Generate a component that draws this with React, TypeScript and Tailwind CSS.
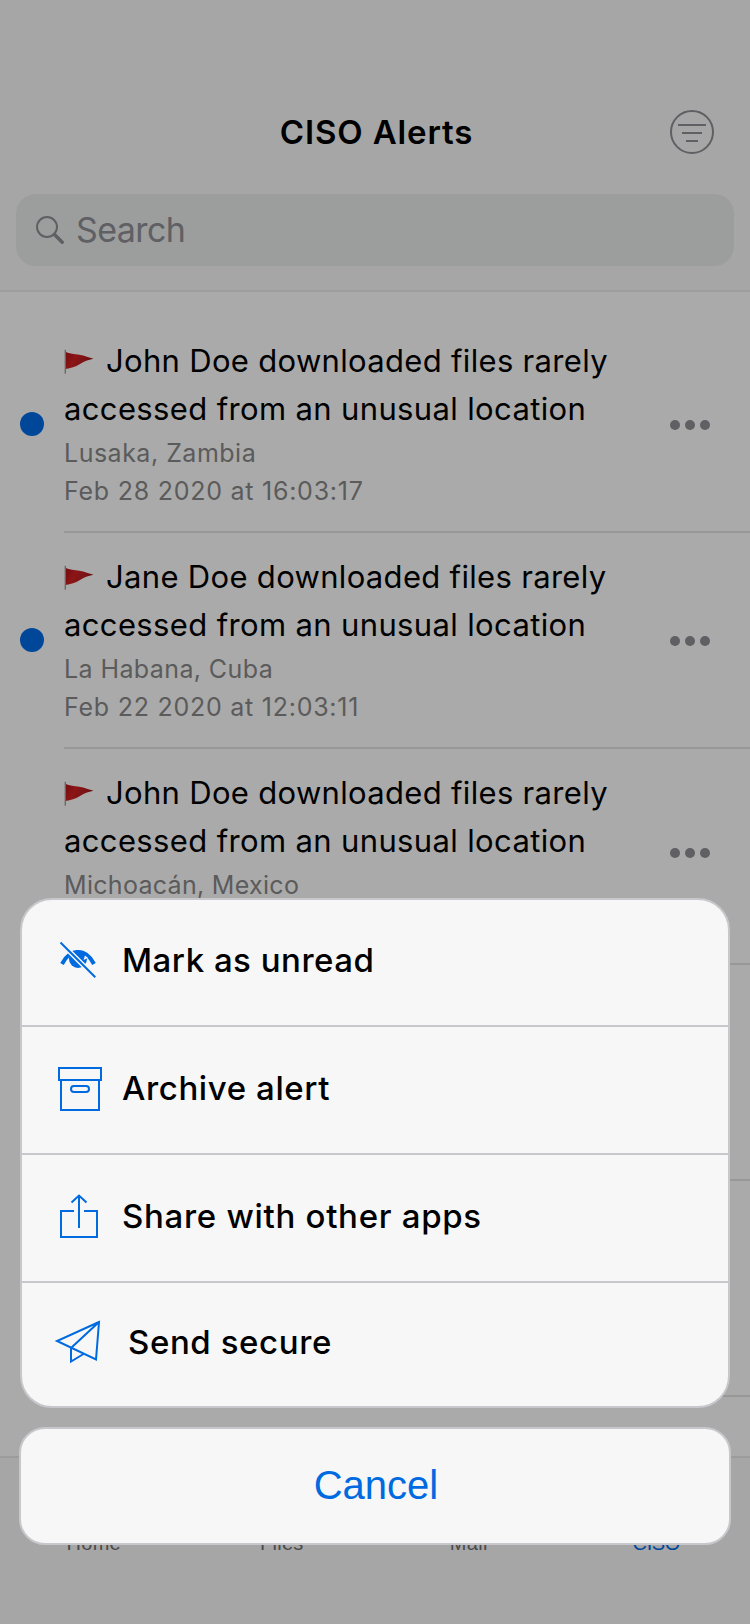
import type { ReactNode } from "react";

type Alert = { title: string; place: string; placeTracking: string; time: string; unread: boolean; more: string };

const alerts: Alert[] = [
  { title: "John Doe downloaded files rarely", place: "Lusaka, Zambia", placeTracking: "tracking-[0.5px]", time: "Feb 28 2020 at 16:03:17", unread: true, more: "pt-[103px]" },
  { title: "Jane Doe downloaded files rarely", place: "La Habana, Cuba", placeTracking: "tracking-[0.4px]", time: "Feb 22 2020 at 12:03:11", unread: true, more: "pt-[103px]" },
  { title: "John Doe downloaded files rarely", place: "Michoacán, Mexico", placeTracking: "tracking-[0.3px]", time: "Feb 20 2020 at 10:12:45", unread: false, more: "pt-[99px]" },
];

function Flag() {
  return (
    <svg className="mt-3 h-[26px] w-[30px] shrink-0" viewBox="0 0 30 26">
      <defs>
        <linearGradient id="flag" x1="0" x2="1" y1="0" y2="0.3">
          <stop offset="0" stopColor="#750c0e" />
          <stop offset="0.4" stopColor="#8c1517" />
          <stop offset="1" stopColor="#6e1011" />
        </linearGradient>
      </defs>
      <path d="M1.5 3C7 5 12 5 18 6.300 22 7.500 25 8.500 29.500 9.800 24 11 20 12.500 16 15 11 18 7 19 1.500 20Z" fill="url(#flag)" />
      <path d="M1.300 .8v24" stroke="#666" strokeWidth="1.300" />
    </svg>
  );
}

function More() {
  return (
    <div className="flex gap-[5px]">
      <span className="size-[10px] rounded-full bg-[#5f5f64]" />
      <span className="size-[10px] rounded-full bg-[#5f5f64]" />
      <span className="size-[10px] rounded-full bg-[#5f5f64]" />
    </div>
  );
}

function AlertRow({ alert }: { alert: Alert }) {
  return (
    <li className="flex h-[216px]">
      <div className="w-16 shrink-0 pt-[95px] pl-5">
        {alert.unread && <div className="size-6 rounded-full bg-[#004799]" />}
      </div>
      <div className="flex grow border-b-2 border-[#989898]">
        <div className="w-[606px] pt-5 whitespace-nowrap">
          <div className="flex h-12 text-[31px] leading-[48px] text-black">
            <Flag />
            <span className="ml-3 tracking-[0.32px]">{alert.title}</span>
          </div>
          <div className="h-12 text-[31px] leading-[48px] tracking-[0.36px] text-black">accessed from an unusual location</div>
          <div className={`mt-px text-[25px] leading-[38px] text-[#5b5b5b] ${alert.placeTracking}`}>{alert.place}</div>
          <div className="text-[25px] leading-[38px] tracking-[0.75px] text-[#5b5b5b]">{alert.time}</div>
        </div>
        <div className={alert.more}>
          <More />
        </div>
      </div>
    </li>
  );
}

function MenuItem({ icon, label, className, labelClass }: { icon: ReactNode; label: string; className: string; labelClass: string }) {
  return (
    <button className={`flex w-full items-start pl-7 text-left text-[33px] leading-[48px] font-medium whitespace-nowrap text-black ${className}`}>
      {icon}
      <span className={labelClass}>{label}</span>
    </button>
  );
}

const iconClass = "h-[60px] w-[60px] shrink-0";

const EyeOff = () => (
  <svg className={iconClass} viewBox="50 936 60 60" fill="none">
    <path d="M62 964C66 956 71 952 78 952s12 4 16 12" stroke="#006ae0" strokeWidth="4" />
    <circle cx="78" cy="959" r="9" fill="#006ae0" />
    <path d="M85 955.500l-1.500 4.500 4.500-2z" fill="#f7f7f7" />
    <path d="M60 942l36 36" stroke="#f7f7f7" strokeWidth="5" />
    <path d="M60.500 942.500l34.800 34.800" stroke="#006ae0" strokeWidth="2" />
  </svg>
);

const Archive = () => (
  <svg className={iconClass} viewBox="50 1064 60 60" fill="none" stroke="#006ae0" strokeWidth="2">
    <path d="M59 1068h42v12H59zM61 1080v30h38v-30" />
    <rect x="71" y="1086" width="18" height="6" rx="3" />
  </svg>
);

const Share = () => (
  <svg className={iconClass} viewBox="50 1192 60 60" fill="none" stroke="#006ae0" strokeWidth="2">
    <path d="M74 1211H61v26h36v-26H84M79 1228v-32M71.500 1202.500l7.500-7 7.500 7" />
  </svg>
);

const Plane = () => (
  <svg className={iconClass} viewBox="50 1318 60 60" fill="none" stroke="#006ae0" strokeWidth="2">
    <path d="M99 1322L57 1341l39 18.500zM99 1322l-28 26v13.500l12.500-7.500" />
  </svg>
);

const tabs = [
  { label: "Home", className: "text-[#4a4a4a] tracking-[0.3px]" },
  { label: "Files", className: "text-[#4a4a4a] pl-px tracking-[0.3px]" },
  { label: "Mail", className: "text-[#4a4a4a] tracking-[0.3px]" },
  { label: "CISO", className: "text-[#004799] tracking-[-0.4px]" },
];

export default function App() {
  return (
    <div className="relative flex h-[1624px] w-[750px] flex-col overflow-hidden bg-[#aaaaaa] font-['Inter','Noto_Sans',sans-serif]">
      <header className="h-[292px] shrink-0 border-b-2 border-[#9e9e9e] bg-[#a6a6a6] px-4 pt-[108px]">
        <div className="grid h-[48px] grid-cols-[1fr_auto_1fr] items-center">
          <span />
          <h1 className="pl-[3px] text-[33px] leading-[48px] font-semibold tracking-[0.85px] text-black">CISO Alerts</h1>
          <svg className="mr-5 size-[44px] justify-self-end" viewBox="0 0 44 44" fill="none" stroke="#5f5f64" strokeWidth="2">
            <circle cx="22" cy="22" r="21" />
            <path d="M8 15h28M12 23h20M16 31h12" />
          </svg>
        </div>
        <div className="mt-[38px] flex h-[72px] items-center rounded-[20px] bg-[#9b9e9c] pl-5">
          <svg className="size-[28px]" viewBox="0 0 28 28" fill="none" stroke="#5f5f64">
            <circle cx="11" cy="11" r="10" strokeWidth="2" />
            <path d="M18.500 18.500l7.700 7.700" strokeWidth="3.500" strokeLinecap="round" />
          </svg>
          <span className="ml-[12px] text-[34px] leading-[48px] tracking-[-0.6px] text-[#5f5f64]">Search</span>
        </div>
      </header>
      <ul className="mt-[25px] grow">
        {alerts.map((a, i) => (
          <AlertRow key={i} alert={a} />
        ))}
        <li className="ml-16 h-[216px] border-b-2 border-[#989898]" />
        <li className="ml-16 h-[216px] border-b-2 border-[#989898]" />
      </ul>
      <nav className="grid h-[168px] shrink-0 grid-cols-4 border-t-2 border-[#9c9c9c] bg-[#a6a6a6] pt-[71px] text-center font-['Liberation_Sans',sans-serif] text-[20px] leading-[28px]">
        {tabs.map((t) => (
          <span key={t.label} className={t.className}>{t.label}</span>
        ))}
      </nav>
      <div className="absolute top-[898px] left-5 h-[510px] w-[710px] overflow-hidden rounded-[32px] border-2 border-[#c7c7cc] bg-[#f7f7f7]">
        <MenuItem icon={<EyeOff />} label="Mark as unread" className="h-[125px] pt-[36px]" labelClass="pl-3 tracking-[0.5px]" />
        <div className="h-[2px] bg-[#c7c7cc]" />
        <MenuItem icon={<Archive />} label="Archive alert" className="h-[126px] pt-[37px]" labelClass="pl-3 tracking-[0.6px]" />
        <div className="h-[2px] bg-[#c7c7cc]" />
        <MenuItem icon={<Share />} label="Share with other apps" className="h-[126px] pt-[37px]" labelClass="pl-3 tracking-[0.7px]" />
        <div className="h-[2px] bg-[#c7c7cc]" />
        <MenuItem icon={<Plane />} label="Send secure" className="h-[123px] pt-[35px]" labelClass="pl-[18px] tracking-[0.6px]" />
      </div>
      <button className="absolute top-[1427px] left-[19px] h-[118px] w-[712px] rounded-[26px] border-2 border-[#c7c7cc] bg-[#f7f7f7] pl-[2px] text-center font-['Liberation_Sans',sans-serif] text-[40px] leading-[112px] text-[#006ae0]">
        <span className="block h-[114px]">Cancel</span>
      </button>
    </div>
  );
}
